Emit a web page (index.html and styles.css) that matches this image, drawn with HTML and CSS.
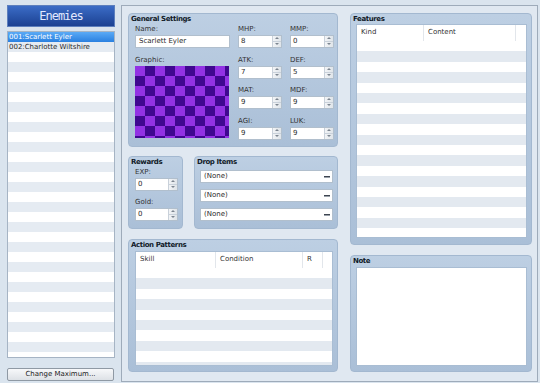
FILE: index.html
```html
<!DOCTYPE html>
<html>
<head>
<meta charset="utf-8">
<link rel="stylesheet" href="styles.css">
</head>
<body>
<div class="app">
  <aside class="sidebar">
    <div class="side-title">Enemies</div>
    <div class="list">
      <div class="item sel">001:Scarlett Eyler</div>
      <div class="item">002:Charlotte Wiltshire</div>
    </div>
    <div class="btn">Change Maximum...</div>
  </aside>
  <main class="frame">
    <div class="col col-left">
      <section class="panel general">
        <h2>General Settings</h2>
        <div class="gen-grid">
          <div class="field"><div class="lbl">Name:</div><div class="input text">Scarlett Eyler</div></div>
          <div class="field"><div class="lbl">MHP:</div><div class="input spin"><span class="val">8</span><span class="arrows"><i class="up"></i><i class="dn"></i></span></div></div>
          <div class="field"><div class="lbl">MMP:</div><div class="input spin"><span class="val">0</span><span class="arrows"><i class="up"></i><i class="dn"></i></span></div></div>
          <div class="field graphic"><div class="lbl">Graphic:</div><div class="checker"></div></div>
          <div class="field"><div class="lbl">ATK:</div><div class="input spin"><span class="val">7</span><span class="arrows"><i class="up"></i><i class="dn"></i></span></div></div>
          <div class="field"><div class="lbl">DEF:</div><div class="input spin"><span class="val">5</span><span class="arrows"><i class="up"></i><i class="dn"></i></span></div></div>
          <div class="field"><div class="lbl">MAT:</div><div class="input spin"><span class="val">9</span><span class="arrows"><i class="up"></i><i class="dn"></i></span></div></div>
          <div class="field"><div class="lbl">MDF:</div><div class="input spin"><span class="val">9</span><span class="arrows"><i class="up"></i><i class="dn"></i></span></div></div>
          <div class="field"><div class="lbl">AGI:</div><div class="input spin"><span class="val">9</span><span class="arrows"><i class="up"></i><i class="dn"></i></span></div></div>
          <div class="field"><div class="lbl">LUK:</div><div class="input spin"><span class="val">9</span><span class="arrows"><i class="up"></i><i class="dn"></i></span></div></div>
        </div>
      </section>
      <div class="mid-row">
        <section class="panel rewards">
          <h2>Rewards</h2>
          <div class="rew-body">
            <div class="field"><div class="lbl">EXP:</div><div class="input spin"><span class="val">0</span><span class="arrows"><i class="up"></i><i class="dn"></i></span></div></div>
            <div class="field"><div class="lbl">Gold:</div><div class="input spin"><span class="val">0</span><span class="arrows"><i class="up"></i><i class="dn"></i></span></div></div>
          </div>
        </section>
        <section class="panel drops">
          <h2>Drop Items</h2>
          <div class="drop-body">
            <div class="input select"><span class="val">(None)</span><span class="dash"></span></div>
            <div class="input select"><span class="val">(None)</span><span class="dash"></span></div>
            <div class="input select"><span class="val">(None)</span><span class="dash"></span></div>
          </div>
        </section>
      </div>
      <section class="panel actions">
        <h2>Action Patterns</h2>
        <div class="table actions-table">
          <div class="thead">
            <span class="th c-skill">Skill</span>
            <span class="th c-cond">Condition</span>
            <span class="th c-r">R</span>
            <span class="th c-rest"></span>
          </div>
          <div class="tbody"></div>
        </div>
      </section>
    </div>
    <div class="col col-right">
      <section class="panel features">
        <h2>Features</h2>
        <div class="table features-table">
          <div class="thead">
            <span class="th c-kind">Kind</span>
            <span class="th c-content">Content</span>
            <span class="th c-rest"></span>
          </div>
          <div class="tbody"></div>
        </div>
      </section>
      <section class="panel note">
        <h2>Note</h2>
        <div class="textarea"></div>
      </section>
    </div>
  </main>
</div>
</body>
</html>
```

FILE: styles.css
```css
* { box-sizing: border-box; margin: 0; padding: 0; }
html, body { width: 540px; height: 383px; overflow: hidden; }
body {
  background: #dae4ee;
  font-family: "DejaVu Sans", Verdana, sans-serif;
  font-size: 7px;
  color: #2b2b2b;
}
.app { display: flex; padding: 5px 0 0 7px; height: 383px; }

/* sidebar */
.sidebar { width: 108px; display: flex; flex-direction: column; }
.side-title {
  height: 22px;
  background: linear-gradient(#3b6cc6, #1c4192);
  border: 1px solid #5d7fbd;
  color: #e2e9ff;
  font-family: "DejaVu Sans Mono", monospace;
  font-size: 12px;
  letter-spacing: -1px;
  display: flex; align-items: center; justify-content: center;
}
.list {
  margin-top: 4px;
  height: 327px;
  border: 1px solid #a6b4c4;
  background: repeating-linear-gradient(#ffffff 0 10px, #e5ebf2 10px 20px);
}
.item { height: 10px; line-height: 10px; padding-left: 1px; white-space: nowrap; color: #2b2b2b; }
.item.sel {
  background: linear-gradient(#5aaaf6, #2a80e0);
  color: #ffffff;
}
.btn {
  margin-top: 10px;
  width: 107px; height: 13px;
  border: 1px solid #8f99a4;
  border-radius: 2px;
  background: linear-gradient(#f7f8fa, #dde1e6);
  text-align: center;
  line-height: 11px;
  color: #222;
}

/* main frame */
.frame {
  margin-left: 6px;
  width: 417px; height: 377px;
  border: 1px solid #9eabba;
  background: #e0e8f1;
  display: flex;
  gap: 12px;
  padding: 7px 5px 9px 6px;
}
.col { display: flex; flex-direction: column; }
.col-left { width: 210px; }
.col-right { width: 182px; }

.panel {
  background: linear-gradient(#bdcfe3, #aabfd7);
  border: 1px solid #a3b8d0;
  border-radius: 4px;
}
.panel h2 {
  font-size: 7px;
  font-weight: bold;
  letter-spacing: -0.4px;
  line-height: 10px;
  height: 10px;
  padding-left: 2px;
  color: #111a28;
}

.lbl { line-height: 11px; height: 11px; color: #333; }
.input {
  height: 13px;
  background: #fff;
  border: 1px solid #b1bfcd;
  display: flex; align-items: center;
  line-height: 11px;
  color: #2b2b2b;
}
.input.text { padding-left: 3px; }
.spin .val { flex: 1; padding-left: 2px; }
.arrows {
  width: 9px; height: 11px;
  display: flex; flex-direction: column;
  border-left: 1px solid #c9d1da;
  background: linear-gradient(90deg, #f2f4f6, #dfe4e9);
}
.arrows i { flex: 1; position: relative; display: block; }
.arrows i.up { border-bottom: 1px solid #c9d1da; }
.arrows i::after {
  content: ""; position: absolute; left: 2px; top: 1px;
  border-left: 2px solid transparent; border-right: 2px solid transparent;
}
.arrows i.up::after { border-bottom: 2px solid #7c8590; }
.arrows i.dn::after { border-top: 2px solid #7c8590; }

/* general settings */
.general { height: 134px; }
.gen-grid {
  display: grid;
  grid-template-columns: 95px 44px 44px;
  grid-template-rows: 24px 24px 24px 24px;
  column-gap: 8px;
  row-gap: 6.5px;
  padding-left: 6px;
}
.graphic { grid-column: 1; grid-row: 2 / span 3; }
.checker {
  width: 94px; height: 72px;
  background: conic-gradient(#3f0890 0 25%, #9232e4 0 50%, #3f0890 0 75%, #9232e4 0);
  background-size: 20px 20px;
}

/* rewards & drops */
.mid-row { display: flex; gap: 11px; margin-top: 9px; height: 73px; }
.rewards { width: 55px; }
.rew-body { padding-left: 6px; display: flex; flex-direction: column; gap: 6px; }
.rew-body .input { width: 43px; }
.drops { width: 144px; }
.drop-body { padding: 3px 0 0 5px; display: flex; flex-direction: column; gap: 6px; }
.select { width: 133px; padding: 0 2px 0 3px; }
.select .val { flex: 1; }
.dash { width: 6px; height: 1px; background: #3e4550; box-shadow: 0 1px 0 #9aa1aa; }

/* action patterns */
.actions { margin-top: 10px; height: 133px; }
.table {
  background: #fff;
  border: 1px solid #a9bdd3;
  display: flex; flex-direction: column;
}
.actions-table { margin: 1px 0 0 6px; width: 198px; height: 115px; }
.thead { display: flex; height: 16px; flex: none; background: #fff; }
.th {
  border-right: 1px solid #e2e6eb;
  padding-left: 4px;
  line-height: 14px;
  color: #333;
}
.c-skill { width: 80px; }
.c-cond { width: 87px; }
.c-r { width: 20px; }
.c-rest { flex: 1; border-right: none; }
.tbody {
  flex: 1;
  background: repeating-linear-gradient(#ffffff 0 10.4px, #e3e9f0 10.4px 20.8px);
}

/* features & note */
.features { height: 232px; }
.features-table { margin-left: 5px; width: 171px; height: 214px; }
.c-kind { width: 67px; }
.c-content { width: 92px; }
.note { margin-top: 10px; height: 117px; }
.textarea {
  margin: 1px 0 0 5px;
  width: 171px; height: 99px;
  background: #fff;
  border: 1px solid #a9bdd3;
}
```
